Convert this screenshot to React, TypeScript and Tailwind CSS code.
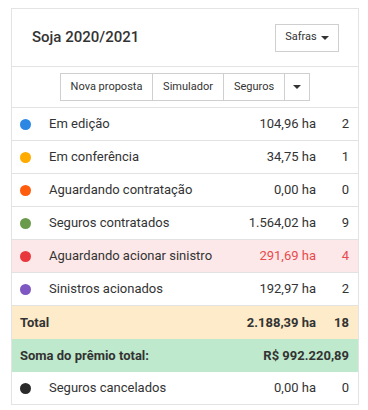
import React from "react";

type Row = {
  label: string;
  area: string;
  count: string;
  dot: string;
  alert?: boolean;
};

const rows: Row[] = [
  { label: "Em edição", area: "104,96 ha", count: "2", dot: "bg-[#2b86e4]" },
  { label: "Em conferência", area: "34,75 ha", count: "1", dot: "bg-[#ffab00]" },
  { label: "Aguardando contratação", area: "0,00 ha", count: "0", dot: "bg-[#ff5c0d]" },
  { label: "Seguros contratados", area: "1.564,02 ha", count: "9", dot: "bg-[#6a9a4c]" },
  { label: "Aguardando acionar sinistro", area: "291,69 ha", count: "4", dot: "bg-[#e8383d]", alert: true },
  { label: "Sinistros acionados", area: "192,97 ha", count: "2", dot: "bg-[#7e57c2]" },
];

function Caret() {
  return (
    <svg width="8" height="4" viewBox="0 0 8 4" className="inline-block" aria-hidden>
      <path d="M0 0h8L4 4z" fill="#333" />
    </svg>
  );
}

function StatusRow({ row }: { row: Row }) {
  return (
    <div
      className={`flex h-[33px] items-center border-b border-[#e2e2e2] pl-[8px] pr-[9px] ${
        row.alert ? "bg-[#fce8e8] text-[#e84a4d]" : "text-[#333]"
      }`}
    >
      <span className={`h-[11px] w-[11px] shrink-0 rounded-full ${row.dot}`} />
      <span className="ml-[18px] flex-1 text-[#333]">{row.label}</span>
      <span className="text-right">{row.area}</span>
      <span className="w-[33px] text-right">{row.count}</span>
    </div>
  );
}

export default function App() {
  return (
    <div className="min-h-[410px] bg-white pl-[11px] pt-[8px] font-['Roboto',sans-serif] text-[13px] text-[#333]">
      <div className="w-[348px] border border-[#e3e3e3]">
        <div className="flex h-[58px] items-center justify-between border-b border-[#e3e3e3] pl-[20px] pr-[19px]">
          <h2 className="text-[15px] font-medium text-[#333]">Soja 2020/2021</h2>
          <button
            type="button"
            className="flex h-[28px] w-[64px] items-center justify-center gap-[4px] border border-[#cfcfcf] bg-white text-[11px] text-[#333]"
          >
            Safras
            <Caret />
          </button>
        </div>

        <div className="flex justify-center border-b border-[#e3e3e3] py-[6px]">
          <div className="flex h-[28px] border border-[#cfcfcf] text-[11px]">
            <button type="button" className="w-[92px] border-r border-[#cfcfcf]">
              Nova proposta
            </button>
            <button type="button" className="w-[71px] border-r border-[#cfcfcf]">
              Simulador
            </button>
            <button type="button" className="w-[61px] border-r border-[#cfcfcf]">
              Seguros
            </button>
            <button type="button" className="flex w-[24px] items-center justify-center">
              <Caret />
            </button>
          </div>
        </div>

        {rows.map((row) => (
          <StatusRow key={row.label} row={row} />
        ))}

        <div className="flex h-[33px] items-center bg-[#fdebc9] pl-[8px] pr-[9px] font-bold">
          <span className="flex-1">Total</span>
          <span>2.188,39 ha</span>
          <span className="w-[33px] text-right">18</span>
        </div>
        <div className="flex h-[33px] items-center bg-[#bfe9cc] pl-[8px] pr-[9px] font-bold">
          <span className="flex-1">Soma do prêmio total:</span>
          <span>R$ 992.220,89</span>
        </div>
        <div className="flex h-[32px] items-center pl-[8px] pr-[9px]">
          <span className="h-[11px] w-[11px] shrink-0 rounded-full bg-[#2a2a2a]" />
          <span className="ml-[18px] flex-1">Seguros cancelados</span>
          <span>0,00 ha</span>
          <span className="w-[33px] text-right">0</span>
        </div>
      </div>
    </div>
  );
}
